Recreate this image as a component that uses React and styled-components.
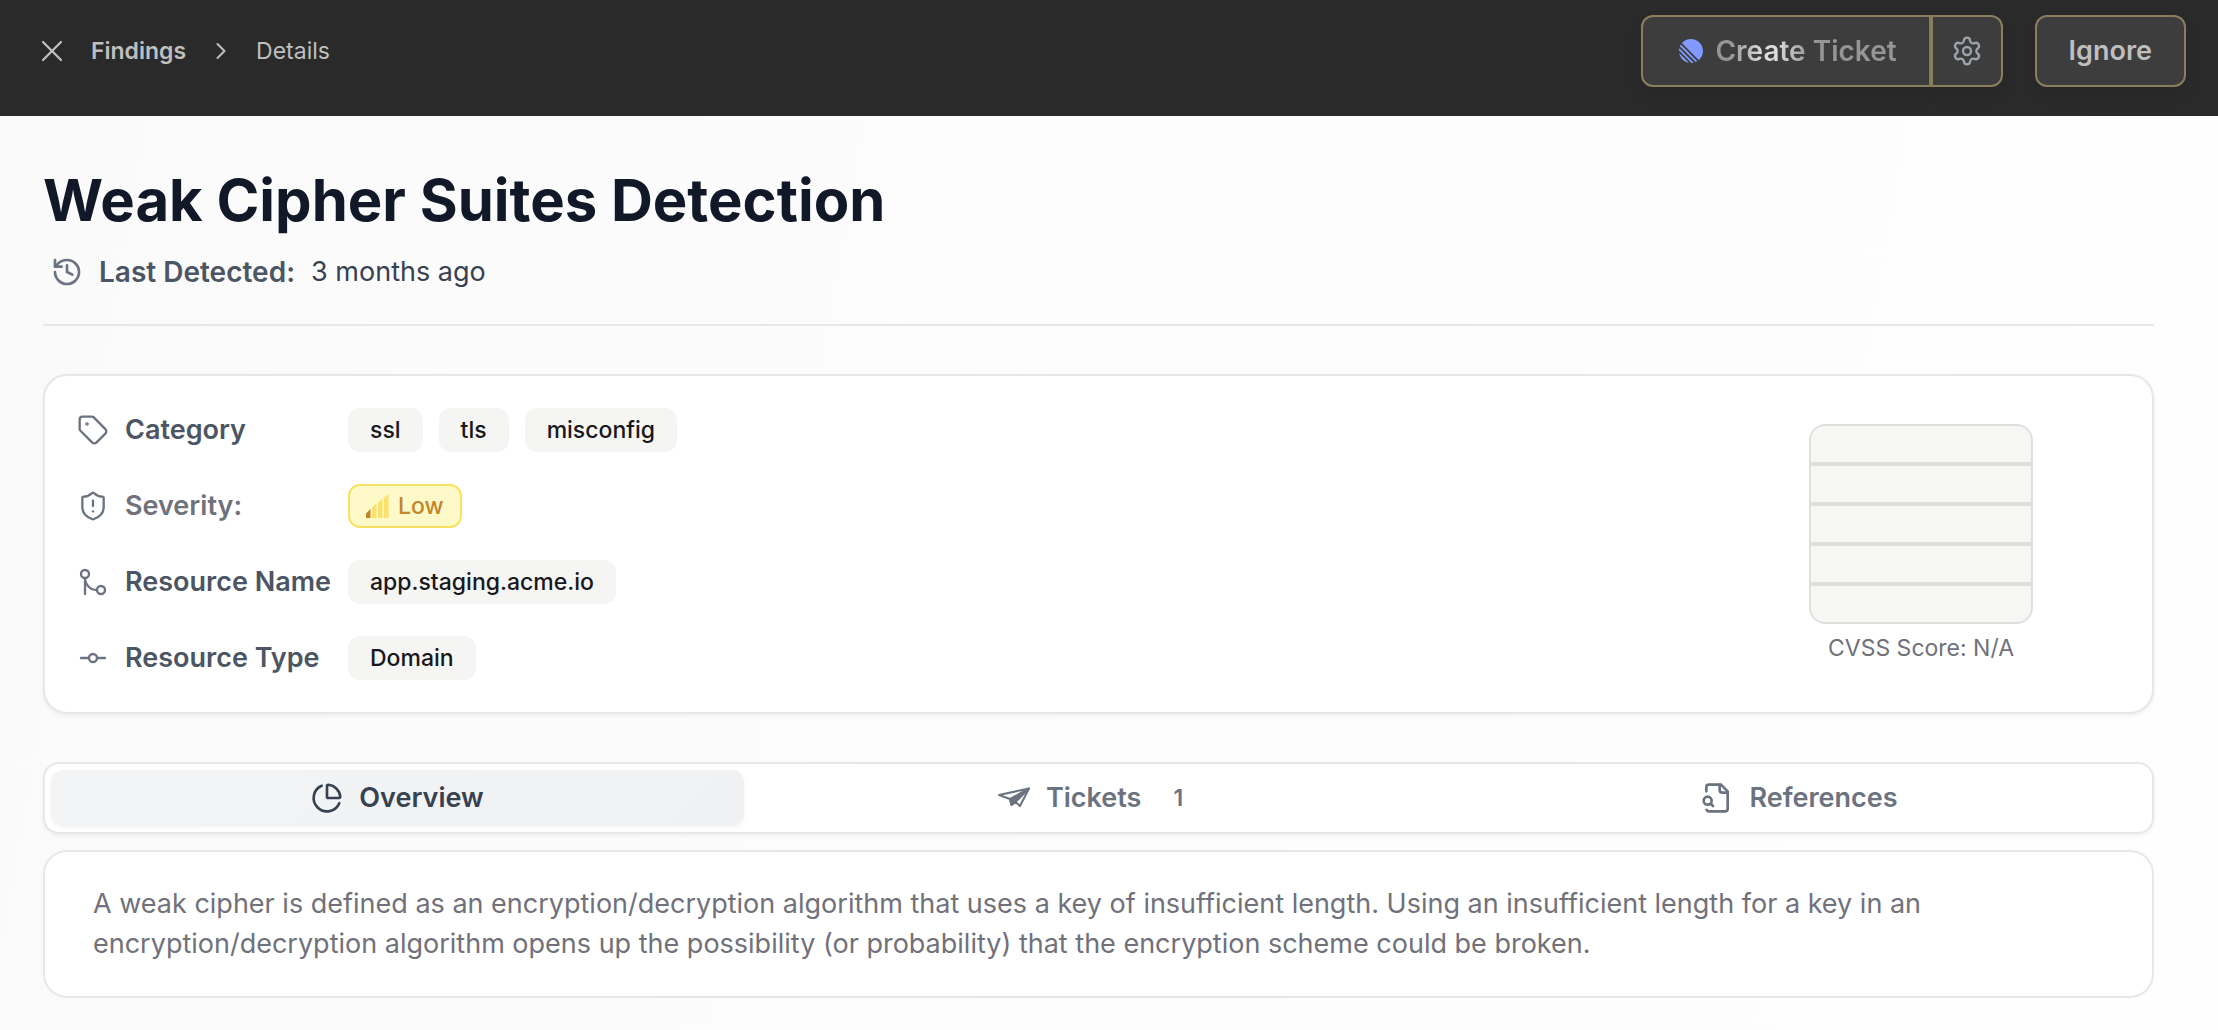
import { useState } from 'react';
import styled, { createGlobalStyle, css } from 'styled-components';
import {
  ChevronRight,
  GitCommitHorizontal,
  GitMerge,
  History,
  PieChart,
  Settings,
  ShieldAlert,
  Tag,
  X,
} from 'lucide-react';

const tabs = [
  { id: 'overview', label: 'Overview', Icon: PieChart },
  { id: 'tickets', label: 'Tickets', Icon: PaperPlane, count: 1 },
  { id: 'references', label: 'References', Icon: FileSearch },
];

function LinearLogo() {
  return (
    <svg width='24' height='24' viewBox='0 0 100 100' fill='#8299ff' aria-hidden='true'>
      <path d='M1.225 61.523c-.222-.949.908-1.546 1.597-.857l36.512 36.512c.69.69.092 1.82-.857 1.597-18.425-4.323-32.93-18.827-37.252-37.252ZM.002 46.889a.99.99 0 0 0 .29.76L52.35 99.71c.201.2.478.307.76.29 2.37-.149 4.695-.46 6.963-.927.765-.157 1.03-1.096.478-1.648L2.576 39.448c-.552-.551-1.491-.286-1.648.479a50.067 50.067 0 0 0-.926 6.962ZM4.21 29.705a.988.988 0 0 0 .208 1.1l64.776 64.776c.289.29.726.375 1.1.208a49.908 49.908 0 0 0 5.185-2.684.981.981 0 0 0 .183-1.54L8.436 24.336a.981.981 0 0 0-1.541.183 49.896 49.896 0 0 0-2.684 5.185ZM12.656 18.074a.986.986 0 0 1-.037-1.356C21.795 6.459 35.11 0 49.926 0 77.592 0 100 22.407 100 50.074c0 14.816-6.46 28.13-16.718 37.307a.986.986 0 0 1-1.356-.037L12.656 18.074Z' />
    </svg>
  );
}

function PaperPlane() {
  return (
    <svg
      width='32'
      height='32'
      viewBox='9 7 32 32'
      fill='none'
      stroke='currentColor'
      strokeWidth='2'
      strokeLinejoin='round'
      aria-hidden='true'
    >
      <path d='M10 20 40 13.500 31 31 26.500 27 22.500 30 21 24Z' />
      <path d='M40 13.500 21 24 22.500 30 26.500 27Z' fill='currentColor' />
    </svg>
  );
}

function FileSearch() {
  return (
    <svg
      width='32'
      height='32'
      viewBox='0 0 24 24'
      fill='none'
      stroke='currentColor'
      strokeWidth='2'
      strokeLinecap='round'
      strokeLinejoin='round'
      aria-hidden='true'
    >
      <path d='M14 2v4a2 2 0 0 0 2 2h4' />
      <path d='M4.268 21a2 2 0 0 0 1.727 1H18a2 2 0 0 0 2-2V7l-5-5H6a2 2 0 0 0-2 2v3' />
      <path d='m9 18-1.500-1.500' />
      <circle cx='5' cy='14' r='3' />
    </svg>
  );
}

function SignalBars() {
  return (
    <svg width='24' height='24' viewBox='0 0 24 24' fill='#fbe16b' aria-hidden='true'>
      <path d='M0 19.500 4.500 15v9H0Z' fill='#c2862c' />
      <path d='M6 13.500 10.500 9.500V24H6ZM12 8.500 16.500 4.500V24H12ZM18 3.500 22.500 0V24H18Z' />
    </svg>
  );
}

const App = () => {
  const [activeTab, setActiveTab] = useState('overview');

  return (
    <>
      <GlobalStyle />
      <Header>
        <Breadcrumbs aria-label='Breadcrumb'>
          <CloseButton aria-label='Close'>
            <X size={36} strokeWidth={1.5} />
          </CloseButton>
          <Crumb href='#findings' $strong>
            Findings
          </Crumb>
          <ChevronRight size={28} strokeWidth={1.75} />
          <Crumb href='#details'>Details</Crumb>
        </Breadcrumbs>
        <Actions>
          <ButtonGroup>
            <Button $side='left'>
              <LinearLogo />
              <Shimmer>Create Ticket</Shimmer>
            </Button>
            <Button $side='right' aria-label='Ticket settings'>
              <Settings size={32} strokeWidth={1.75} />
            </Button>
          </ButtonGroup>
          <Button>Ignore</Button>
        </Actions>
      </Header>

      <Main>
        <TitleBlock>
          <Title>Weak Cipher Suites Detection</Title>
          <Detected>
            <History size={32} />
            <strong>Last Detected:</strong>
            <span>3 months ago</span>
          </Detected>
        </TitleBlock>

        <Summary>
          <Fields>
            <Field>
              <Label>
                <Tag size={32} strokeWidth={1.75} />
                Category
              </Label>
              <Chips>
                <Chip>ssl</Chip>
                <Chip>tls</Chip>
                <Chip>misconfig</Chip>
              </Chips>
            </Field>
            <Field>
              <Label $muted>
                <ShieldAlert size={32} strokeWidth={1.75} />
                Severity:
              </Label>
              <Chips>
                <Severity>
                  <SignalBars />
                  Low
                </Severity>
              </Chips>
            </Field>
            <Field>
              <Label>
                <GitMerge size={32} strokeWidth={1.75} />
                Resource Name
              </Label>
              <Chips>
                <Chip>app.staging.acme.io</Chip>
              </Chips>
            </Field>
            <Field>
              <Label>
                <GitCommitHorizontal size={32} strokeWidth={1.75} />
                Resource Type
              </Label>
              <Chips>
                <Chip>Domain</Chip>
              </Chips>
            </Field>
          </Fields>
          <Score>
            <ScoreStack>
              {[5, 4, 3, 2, 1].map((level) => (
                <ScoreLevel key={level} />
              ))}
            </ScoreStack>
            <p>CVSS Score: N/A</p>
          </Score>
        </Summary>

        <TabList role='tablist'>
          {tabs.map(({ id, label, Icon, count }) => (
            <Tab
              key={id}
              role='tab'
              aria-selected={id === activeTab}
              $active={id === activeTab}
              onClick={() => setActiveTab(id)}
            >
              <Icon size={32} />
              {label}
              {count && <Count>{count}</Count>}
            </Tab>
          ))}
        </TabList>

        <Description role='tabpanel'>
          A weak cipher is defined as an encryption/decryption algorithm that uses a key of
          insufficient length. Using an insufficient length for a key in an encryption/decryption
          algorithm opens up the possibility (or probability) that the encryption scheme could be
          broken.
        </Description>
      </Main>
    </>
  );
};

const GlobalStyle = createGlobalStyle`
  * {
    box-sizing: border-box;
    margin: 0;
  }

  body {
    min-height: 100vh;
    background: linear-gradient(100deg, #fafafa, #fcfcfd 40%, #fefefe);
    color: #18181b;
    font-family: Inter, 'Liberation Sans', sans-serif;
    font-size: 27px;
    line-height: 40px;
  }

  svg {
    flex-shrink: 0;
  }
`;

const Header = styled.header`
  display: flex;
  justify-content: space-between;
  align-items: flex-start;
  padding: 15px 32px 29px;
  background-color: #2a2a2a;
  color: #bfbfbf;
`;

const Breadcrumbs = styled.nav`
  display: flex;
  align-items: center;
  gap: 21px;
  height: 72px;
  padding-left: 2px;
`;

const CloseButton = styled.button`
  display: flex;
  padding: 0;
  border: 0;
  background: none;
  color: inherit;
  cursor: pointer;
`;

const Crumb = styled.a`
  color: inherit;
  font-size: 23px;
  font-weight: ${(props) => (props.$strong ? 600 : 400)};
  text-decoration: none;
`;

const Actions = styled.div`
  display: flex;
  gap: 32px;
`;

const ButtonGroup = styled.div`
  display: flex;
`;

const Button = styled.button`
  display: flex;
  align-items: center;
  gap: 12px;
  height: 72px;
  padding: 0 32px;
  border: 2px solid #8a7e5d;
  border-radius: 12px;
  background-color: #3d3d3d;
  box-shadow: 0 8px 16px rgba(0, 0, 0, 0.08);
  color: #bfbfbf;
  font: inherit;
  font-weight: 600;
  cursor: pointer;

  ${(props) =>
    props.$side === 'left' &&
    css`
      padding: 0 32px 0 36px;
      border-radius: 12px 0 0 12px;
    `}

  ${(props) =>
    props.$side === 'right' &&
    css`
      padding: 0 18px;
      border-radius: 0 12px 12px 0;
      color: #9ca3af;
    `}
`;

const Shimmer = styled.span`
  background: linear-gradient(90deg, #959595 8%, #dcdcdc 26%, #dcdcdc 34%, #959595 52%);
  background-clip: text;
  color: transparent;
  font-size: 28px;
`;

const Main = styled.main`
  padding: 48px 64px 32px 43px;
`;

const TitleBlock = styled.div`
  padding-bottom: 32px;
  border-bottom: 2px solid #e5e7eb;
`;

const Title = styled.h1`
  color: #111827;
  font-size: 58px;
  font-weight: 700;
  line-height: 72px;
`;

const Detected = styled.div`
  display: flex;
  align-items: center;
  gap: 16px;
  margin-top: 16px;
  padding-left: 8px;
  color: #374151;

  svg {
    color: #6b7280;
  }

  strong {
    color: #4b5563;
    font-size: 28px;
    font-weight: 600;
  }
`;

const Panel = styled.section`
  border: 2px solid #e5e7eb;
  border-radius: 24px;
  background-color: #fff;
`;

const Summary = styled(Panel)`
  display: flex;
  justify-content: space-between;
  align-items: center;
  margin-top: 48px;
  padding: 32px;
  box-shadow: 0 2px 4px rgba(0, 0, 0, 0.05);
`;

const Fields = styled.dl`
  display: flex;
  flex-direction: column;
  gap: 32px;
`;

const Field = styled.div`
  display: flex;
  align-items: center;
`;

const Label = styled.dt`
  display: flex;
  align-items: center;
  gap: 16px;
  width: 271px;
  color: ${(props) => (props.$muted ? '#71717a' : '#4b5563')};
  font-weight: 600;
  white-space: nowrap;

  svg {
    color: #6b7280;
  }
`;

const Chips = styled.dd`
  display: flex;
  gap: 16px;
`;

const Chip = styled.span`
  display: flex;
  align-items: center;
  height: 44px;
  padding: 0 22px;
  border-radius: 12px;
  background-color: #f5f5f4;
  font-size: 23px;
  font-weight: 500;
`;

const Severity = styled(Chip)`
  gap: 8px;
  padding: 0 16px;
  border: 2px solid #fae15f;
  background-color: #fef9c8;
  color: #c2862c;
`;

const Score = styled.div`
  display: flex;
  flex-direction: column;
  align-items: center;
  gap: 8px;
  width: 398px;
  color: #71717a;
  font-size: 23px;
  line-height: 32px;
`;

const ScoreStack = styled.div`
  width: 224px;
  overflow: hidden;
  border-radius: 16px;
`;

const ScoreLevel = styled.div`
  height: 40px;
  border: 2px solid #dfdfde;
  background-color: #f6f6f4;

  &:first-child {
    border-radius: 16px 16px 0 0;
  }

  &:last-child {
    border-radius: 0 0 16px 16px;
  }
`;

const TabList = styled.div`
  display: flex;
  gap: 8px;
  margin-top: 48px;
  padding: 6px;
  border: 2px solid #e5e7eb;
  border-radius: 16px;
  background-color: #fff;
  box-shadow: 0 2px 4px rgba(0, 0, 0, 0.05);
`;

const Tab = styled.button`
  display: flex;
  flex: 1;
  align-items: center;
  justify-content: center;
  gap: 16px;
  height: 56px;
  border: 0;
  border-radius: 12px;
  background: none;
  color: #6b7280;
  font: inherit;
  font-weight: 600;
  cursor: pointer;

  ${(props) =>
    props.$active &&
    css`
      background: linear-gradient(135deg, #f3f4f6, #eff1f3);
      box-shadow: 0 2px 4px rgba(0, 0, 0, 0.04);
      color: #374151;
    `}
`;

const Count = styled.span`
  padding: 0 16px;
  font-size: 23px;
`;

const Description = styled(Panel)`
  margin-top: 16px;
  padding: 32px 48px;
  color: #71717a;
`;

export default App;
